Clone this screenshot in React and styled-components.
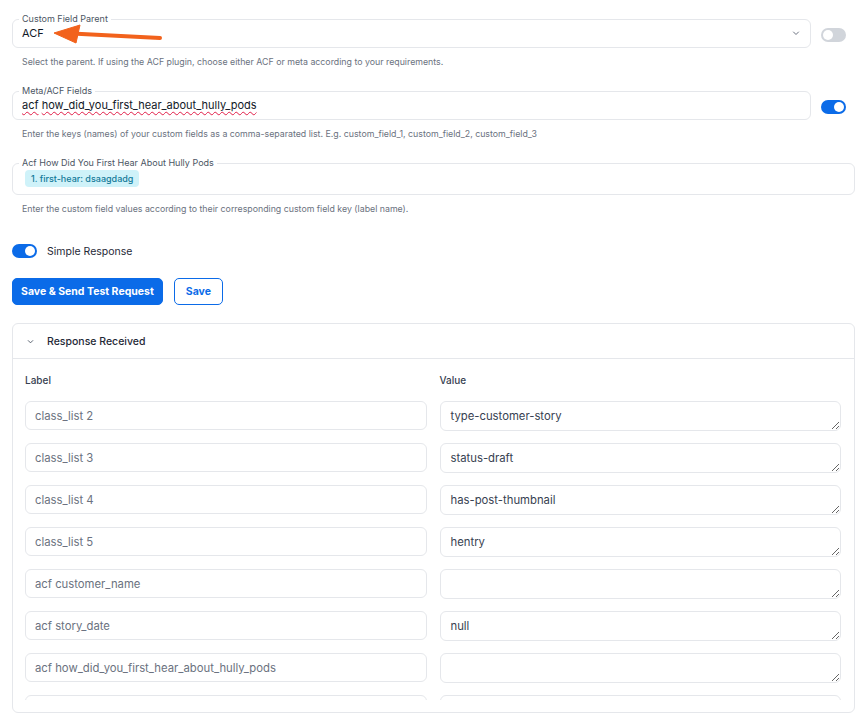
import { Fragment } from "react";
import styled, { createGlobalStyle } from "styled-components";

const GlobalStyle = createGlobalStyle`
  * { box-sizing: border-box; }
  body {
    margin: 0;
    background: #ffffff;
    font-family: Inter, "Noto Sans", "Liberation Sans", sans-serif;
    color: #1f2937;
  }
`;

const responseRows = [
  { label: "class_list 2", value: "type-customer-story" },
  { label: "class_list 3", value: "status-draft" },
  { label: "class_list 4", value: "has-post-thumbnail" },
  { label: "class_list 5", value: "hentry" },
  { label: "acf customer_name", value: "" },
  { label: "acf story_date", value: "null" },
  { label: "acf how_did_you_first_hear_about_hully_pods", value: "" },
  { label: "acf story_title", value: "" },
];

const Page = styled.div`
  position: relative;
  padding: 13px 6px 20px 12px;
  display: flex;
  flex-direction: column;
`;

const Group = styled.div`
  display: flex;
  flex-direction: column;
  margin-bottom: 17px;
`;

const FieldRow = styled.div`
  display: flex;
  align-items: flex-start;
  gap: 10px;
`;

const Fieldset = styled.fieldset`
  flex: 1;
  min-width: 0;
  margin: 0;
  padding: 0 9px ${(p) => (p.$tall ? "7px" : "6px")};
  border: 1px solid #e5e7eb;
  border-radius: 6px;
`;

const Legend = styled.legend`
  padding: 0 3px;
  margin-left: -3px;
  font-size: 9px;
  line-height: 12px;
  color: #4b5563;
`;

const SelectValue = styled.div`
  display: flex;
  align-items: center;
  justify-content: space-between;
  height: 16px;
  font-size: 11px;
  color: #111827;
`;

const TextValue = styled.div`
  height: 16px;
  line-height: 16px;
  font-size: 11px;
  color: #111827;
  span {
    text-decoration: underline wavy #e11d48;
    text-decoration-thickness: 1px;
    text-underline-offset: 2px;
  }
`;

const Chip = styled.div`
  display: flex;
  align-items: center;
  width: fit-content;
  height: 17px;
  margin: 1px 0 0 3px;
  padding: 0 6px;
  border-radius: 4px;
  background: #cff2f9;
  color: #137a99;
  font-size: 9px;
  font-weight: 500;
`;

const ToggleSlot = styled.div`
  width: 34px;
  padding-top: ${(p) => p.$top || 0}px;
`;

const Toggle = styled.span`
  position: relative;
  display: inline-block;
  flex-shrink: 0;
  width: 25px;
  height: 14px;
  border-radius: 7px;
  background: ${(p) => (p.$on ? "#0b6be8" : "#d1d5db")};
  &::after {
    content: "";
    position: absolute;
    top: 2px;
    left: ${(p) => (p.$on ? "13px" : "2px")};
    width: 10px;
    height: 10px;
    border-radius: 50%;
    background: #ffffff;
  }
`;

const Help = styled.div`
  margin-top: 8px;
  padding-left: 10px;
  font-size: 8.8px;
  line-height: 12px;
  color: #6b7280;
`;

const SwitchLine = styled.label`
  display: flex;
  align-items: center;
  gap: 10px;
  margin-top: 12px;
  font-size: 10.5px;
  color: #1f2937;
`;

const Actions = styled.div`
  display: flex;
  gap: 11px;
  margin-top: 20px;
`;

const Button = styled.button`
  height: 27px;
  padding: 0 8px;
  border-radius: 5px;
  border: 1px solid #0b6be8;
  background: #0b6be8;
  color: #ffffff;
  font-family: inherit;
  font-size: 10.5px;
  font-weight: 700;
  cursor: pointer;
`;

const OutlineButton = styled(Button)`
  background: #ffffff;
  color: #0b6be8;
  padding: 0 11px;
`;

const Panel = styled.section`
  margin-top: 18px;
  border: 1px solid #e5e7eb;
  border-radius: 6px;
`;

const PanelHeader = styled.div`
  display: flex;
  align-items: center;
  gap: 12px;
  height: 35px;
  padding-left: 13px;
  border-bottom: 1px solid #e5e7eb;
  font-size: 10.5px;
  font-weight: 500;
  color: #1f2937;
`;

const PanelBody = styled.div`
  padding: 14px 13px 12px 12px;
`;

const Grid = styled.div`
  display: grid;
  grid-template-columns: 1fr 1fr;
  column-gap: 13px;
  row-gap: 12px;
`;

const ColHead = styled.div`
  font-size: 10px;
  line-height: 14px;
  font-weight: 500;
  color: #374151;
`;

const Rows = styled(Grid)`
  margin-top: 14px;
  max-height: 299px;
  overflow: hidden;
`;

const LabelInput = styled.input`
  width: 100%;
  height: 29px;
  padding: 0 9px;
  border: 1px solid #e5e7eb;
  border-radius: 6px;
  font-family: inherit;
  font-size: 11.3px;
  color: #6b7280;
  background: #ffffff;
  outline: none;
`;

const ValueArea = styled.textarea`
  display: block;
  width: 100%;
  height: 30px;
  padding: 7px 10px;
  border: 1px solid #e5e7eb;
  border-radius: 6px;
  font-family: inherit;
  font-size: 11.3px;
  line-height: 14px;
  color: #374151;
  background: #ffffff;
  outline: none;
  resize: vertical;
`;

const Arrow = styled.svg`
  position: absolute;
  left: 0;
  top: 0;
  pointer-events: none;
`;

const Chevron = ({ size = 10, color = "#6b7280" }) => (
  <svg width={size} height={size} viewBox="0 0 10 10">
    <path d="M2.5 4 L5 6.5 L7.5 4" fill="none" stroke={color} strokeWidth="1" strokeLinecap="round" strokeLinejoin="round" />
  </svg>
);

export default function App() {
  return (
    <>
      <GlobalStyle />
      <Page>
        <Group>
          <FieldRow>
            <Fieldset>
              <Legend>Custom Field Parent</Legend>
              <SelectValue>
                ACF
                <Chevron />
              </SelectValue>
            </Fieldset>
            <ToggleSlot $top={13}>
              <Toggle />
            </ToggleSlot>
          </FieldRow>
          <Help>Select the parent. If using the ACF plugin, choose either ACF or meta according to your requirements.</Help>
        </Group>

        <Group>
          <FieldRow>
            <Fieldset>
              <Legend>Meta/ACF Fields</Legend>
              <TextValue>
                <span>acf</span> <span>how_did_you_first_hear_about_hully_pods</span>
              </TextValue>
            </Fieldset>
            <ToggleSlot $top={13}>
              <Toggle $on />
            </ToggleSlot>
          </FieldRow>
          <Help>Enter the keys (names) of your custom fields as a comma-separated list. E.g. custom_field_1, custom_field_2, custom_field_3</Help>
        </Group>

        <Group>
          <Fieldset $tall>
            <Legend>Acf How Did You First Hear About Hully Pods</Legend>
            <Chip>1. first-hear: dsaagdadg</Chip>
          </Fieldset>
          <Help>Enter the custom field values according to their corresponding custom field key (label name).</Help>
        </Group>

        <SwitchLine>
          <Toggle $on />
          Simple Response
        </SwitchLine>

        <Actions>
          <Button>Save &amp; Send Test Request</Button>
          <OutlineButton>Save</OutlineButton>
        </Actions>

        <Panel>
          <PanelHeader>
            <Chevron size={9} color="#4b5563" />
            Response Received
          </PanelHeader>
          <PanelBody>
            <Grid>
              <ColHead>Label</ColHead>
              <ColHead>Value</ColHead>
            </Grid>
            <Rows>
              {responseRows.map((row) => (
                <Fragment key={row.label}>
                  <LabelInput readOnly value={row.label} />
                  <ValueArea readOnly value={row.value} />
                </Fragment>
              ))}
            </Rows>
          </PanelBody>
        </Panel>

        <Arrow width="170" height="50" viewBox="0 0 170 50">
          <line x1="72" y1="33.5" x2="160" y2="38" stroke="#f2621c" strokeWidth="4" strokeLinecap="round" />
          <path d="M54 33 L80 25 L76 43 Z" fill="#f2621c" strokeLinejoin="round" stroke="#f2621c" strokeWidth="1" />
        </Arrow>
      </Page>
    </>
  );
}
